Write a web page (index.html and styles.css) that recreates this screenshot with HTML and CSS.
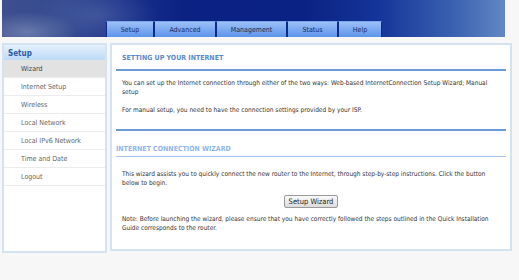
FILE: index.html
```html
<!DOCTYPE html>
<html lang="en">
<head>
  <meta charset="UTF-8" />
  <title>Setup Wizard</title>
  <link rel="stylesheet" href="styles.css">
</head>
<body>
  <div class="banner">
    <ul class="tabs">
      <li class="tab tab-setup">Setup</li>
      <li class="tab tab-adv">Advanced</li>
      <li class="tab tab-mgmt">Management</li>
      <li class="tab tab-status">Status</li>
      <li class="tab tab-help">Help</li>
    </ul>
  </div>

  <div class="layout">
    <div class="sidebar">
      <div class="side-head">Setup</div>
      <ul class="side-menu">
        <li class="active">Wizard</li>
        <li>Internet Setup</li>
        <li>Wireless</li>
        <li>Local Network</li>
        <li>Local IPv6 Network</li>
        <li>Time and Date</li>
        <li>Logout</li>
      </ul>
    </div>

    <div class="content">
      <div class="box box-intro">
        <h2 class="box-title">SETTING UP YOUR INTERNET</h2>
        <p class="first">You can set up the Internet connection through either of the two ways: Web-based InternetConnection Setup Wizard; Manual setup</p>
        <p>For manual setup, you need to have the connection settings provided by your ISP.</p>
      </div>

      <div class="box box-wizard">
        <h2 class="box-title light">INTERNET CONNECTION WIZARD</h2>
        <p class="first">This wizard assists you to quickly connect the new router to the Internet, through step-by-step instructions. Click the button below to begin.</p>
        <div class="actions"><button>Setup Wizard</button></div>
        <p>Note: Before launching the wizard, please ensure that you have correctly followed the steps outlined in the Quick Installation Guide corresponds to the router.</p>
      </div>
    </div>
  </div>
</body>
</html>
```

FILE: styles.css
```css
:root {
  --page-bg: #f7f7f7;
  --frame: #d3e3f1;
  --accent: #6b9ad6;
  --text: #333;
}

body {
  margin: 0;
  background-color: var(--page-bg);
  font-family: Tahoma, "DejaVu Sans Condensed", "Liberation Sans", sans-serif;
  color: var(--text);
}

.banner {
  margin-left: 2px;
  width: 503px;
  height: 37px;
  background:
    radial-gradient(ellipse 50px 20px at 25px 32px, rgba(150,165,200,0.5), rgba(150,165,200,0) 100%),
    radial-gradient(ellipse 60px 30px at 95px 15px, rgba(90,110,170,0.5), rgba(90,110,170,0) 100%),
    linear-gradient(90deg, #3d4f8e 0%, #34498f 12%, #1a318a 24%, #0b2283 36%, #0a2283 60%, #15359a 75%, #3a62b0 90%, #6288c4 100%);
  display: flex;
  align-items: flex-end;
  padding-left: 104px;
  box-sizing: border-box;
}

.tabs {
  list-style: none;
  margin: 0;
  padding: 0;
  display: flex;
}

.tab {
  box-sizing: border-box;
  height: 16px;
  line-height: 17px;
  text-align: center;
  font-size: 7px;
  color: #1a2a55;
  background: linear-gradient(#9cc0f7, #5d94ea);
  border-left: 1px solid #0d2a8a;
  border-right: 1px solid #0d2a8a;
  border-top: 1px solid #7aa6ee;
}

.tab-setup { width: 48px; }
.tab-adv { width: 62px; }
.tab-mgmt { width: 71px; }
.tab-status { width: 51px; }
.tab-help { width: 44px; }

.layout {
  display: flex;
  gap: 3px;
  margin: 6px 0 0 2px;
}

.sidebar {
  width: 101px;
  height: 206px;
  border: 2px solid var(--frame);
  background: #fff;
}

.side-head {
  height: 15px;
  line-height: 17px;
  padding-left: 4px;
  font-size: 8px;
  font-weight: bold;
  color: #2a5aa8;
  background: linear-gradient(#e6f1fc, #bcdaf7);
}

.side-menu {
  list-style: none;
  margin: 0;
  padding: 0;
}

.side-menu li {
  height: 17px;
  line-height: 19px;
  padding-left: 17px;
  font-size: 7px;
  color: #666;
  border-bottom: 1px solid #ececec;
}

.side-menu li.active {
  background: #e2e2e2;
  color: #444;
}

.content {
  width: 390px;
  height: 204px;
  border: 2px solid var(--frame);
  background: #fff;
  padding: 0 4px;
}

.box-title {
  margin: 0;
  font-size: 7px;
  font-weight: bold;
  color: #5b8ac6;
  height: 24px;
  line-height: 26px;
  padding-left: 6px;
  border-bottom: 2px solid var(--accent);
}

.box-title.light {
  color: #8fb6ea;
  padding: 12px 0 0;
  height: 13px;
  line-height: 13px;
  border-bottom: 1px solid #a6c6ee;
}

.box p {
  margin: 0;
  padding: 0 6px;
  font-size: 6.5px;
  line-height: 9px;
}

.box-intro {
  border-bottom: 2px solid var(--accent);
  padding-bottom: 14px;
}

.box-intro p.first {
  margin: 8px 0 9px;
}

.box-wizard p.first {
  margin: 13px 0 7px;
}

.actions {
  display: flex;
  justify-content: center;
  margin-bottom: 7px;
}

button {
  font-family: inherit;
  font-size: 7.5px;
  color: #222;
  padding: 0 4px;
  white-space: nowrap;
  height: 13px;
  border: 1px solid #9a9a9a;
  border-radius: 2px;
  background: linear-gradient(#fafafa, #dcdcdc);
}
```
